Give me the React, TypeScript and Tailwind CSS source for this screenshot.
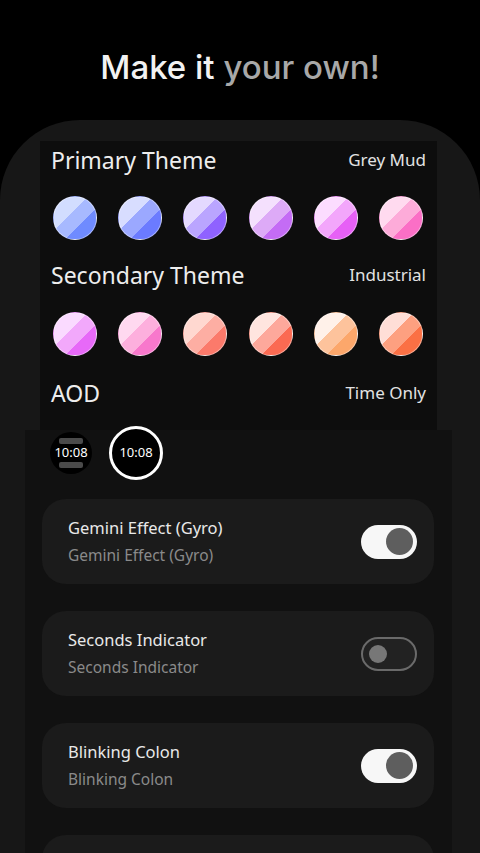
import React from "react";

const primary = [
    ["#d2ddff", "#a7b9ff", "#6f8bff"],
    ["#d8ddff", "#9ba8ff", "#6b7bff"],
    ["#e4d9ff", "#baa5ff", "#8f62ff"],
    ["#f4e0fd", "#ddaaf7", "#c46cf5"],
    ["#fcdcff", "#f3a6fb", "#e760f6"],
    ["#ffdaef", "#fdabd9", "#fb6fc6"],
];

const secondary = [
    ["#fadaff", "#f2a8fb", "#e769f8"],
    ["#ffd9f0", "#fdafdd", "#f878cc"],
    ["#ffd8d0", "#fdaea3", "#fb7a6b"],
    ["#ffe5df", "#fda89b", "#fb6a52"],
    ["#fff1e9", "#fdc39c", "#fca76b"],
    ["#ffded7", "#fda080", "#fb7044"],
];

const settings = [
    { title: "Gemini Effect (Gyro)", on: true },
    { title: "Seconds Indicator", on: false },
    { title: "Blinking Colon", on: true },
];

const Swatch = ({ c }: { c: string[] }) => (
    <div
        className="w-[44px] h-[44px] rounded-full border border-white/40"
        style={{
            background: `linear-gradient(135deg, ${c[0]} 0 40%, ${c[1]} 40% 64%, ${c[2]} 64%)`,
        }}
    />
);

const Header = ({ title, value }: { title: string; value: string }) => (
    <div className="flex h-[38px] items-center justify-between pl-[11px] pr-[11px]">
        <span className="text-[23px] text-[#ededed]">{title}</span>
        <span className="text-[17px] text-[#e2e2e2]">{value}</span>
    </div>
);

const Toggle = ({ on }: { on: boolean }) =>
    on ? (
        <div className="w-[56px] h-[34px] rounded-full bg-[#f7f7f7] flex items-center justify-end pr-[4px]">
            <div className="w-[27px] h-[27px] rounded-full bg-[#5e5e5e]" />
        </div>
    ) : (
        <div className="w-[56px] h-[34px] rounded-full bg-[#222] border-2 border-[#6a6a6a] flex items-center pl-[6px]">
            <div className="w-[18px] h-[18px] rounded-full bg-[#777]" />
        </div>
    );

export default function App() {
    return (
        <div
            className="w-[480px] h-[853px] overflow-hidden bg-black"
            style={{ fontFamily: '"Noto Sans", "Open Sans", sans-serif' }}
        >
            <div
                className="h-[120px] flex items-center justify-center pt-[16px] text-[33px] font-medium"
                style={{ fontFamily: 'Inter, "Noto Sans", sans-serif' }}
            >
                <span className="text-[#f2f2f2]">Make it&nbsp;</span>
                <span className="text-[#a8a8a8]">your own!</span>
            </div>
            <div className="bg-[#171717] rounded-t-[80px] pt-[21px] h-[733px]">
                <div className="mx-[40px] w-[397px] bg-[#0d0d0d] pb-[18px]">
                    <Header title="Primary Theme" value="Grey Mud" />
                    <div className="flex h-[77px] items-center justify-between pl-[13px] pr-[14px]">
                        {primary.map((c, i) => (
                            <Swatch key={i} c={c} />
                        ))}
                    </div>
                    <Header title="Secondary Theme" value="Industrial" />
                    <div className="flex h-[80px] items-center justify-between pl-[13px] pr-[14px]">
                        {secondary.map((c, i) => (
                            <Swatch key={i} c={c} />
                        ))}
                    </div>
                    <Header title="AOD" value="Time Only" />
                </div>
                <div className="mx-[25px] w-[427px] bg-[#111] h-[500px]">
                    <div className="flex h-[46px] items-center pl-[25px] gap-[17px]">
                        <div className="relative w-[42px] h-[42px] rounded-full bg-black flex items-center justify-center">
                            <div className="absolute top-[6px] w-[24px] h-[6px] rounded-[2px] bg-[#4a4a4a]" />
                            <span className="text-[13px] text-white">10:08</span>
                            <div className="absolute bottom-[6px] w-[24px] h-[6px] rounded-[2px] bg-[#4a4a4a]" />
                        </div>
                        <div className="w-[54px] h-[54px] rounded-full bg-black border-[3px] border-white flex items-center justify-center">
                            <span className="text-[13px] text-white">10:08</span>
                        </div>
                    </div>
                    <div className="flex flex-col gap-[27px] mt-[23px] ml-[17px] mr-[18px]">
                        {settings.map((s) => (
                            <div
                                key={s.title}
                                className="h-[85px] rounded-[24px] bg-[#1b1b1b] flex items-center justify-between pl-[26px] pr-[17px]"
                            >
                                <div className="flex flex-col gap-[3px]">
                                    <span className="text-[16.5px] text-[#e9e9e9]">{s.title}</span>
                                    <span className="text-[15.5px] text-[#8a8a8a]">{s.title}</span>
                                </div>
                                <Toggle on={s.on} />
                            </div>
                        ))}
                        <div className="h-[85px] rounded-[24px] bg-[#1b1b1b]" />
                    </div>
                </div>
            </div>
        </div>
    );
}
